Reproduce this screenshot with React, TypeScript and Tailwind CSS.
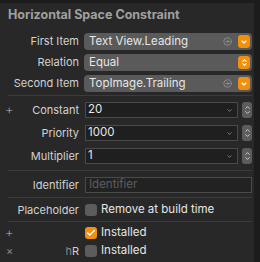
import { ChevronDown, ChevronUp, CircleArrowRight, Check } from "lucide-react";

const font = { fontFamily: "Inter, 'Liberation Sans', sans-serif" };

const Label = ({ children }: { children: React.ReactNode }) => (
  <div className="w-[79px] shrink-0 text-right text-[11px] text-[#d2d2d2]">{children}</div>
);

const OrangeBtn = ({ both }: { both?: boolean }) => (
  <div className="flex h-[13px] w-[12px] flex-col items-center justify-center rounded-[3px] bg-[#f0900c]">
    {both ? (
      <>
        <ChevronUp className="-mb-[3px] h-[7px] w-[7px] text-white" strokeWidth={3.5} />
        <ChevronDown className="h-[7px] w-[7px] text-white" strokeWidth={3.5} />
      </>
    ) : (
      <ChevronDown className="h-[8px] w-[8px] text-white" strokeWidth={3.5} />
    )}
  </div>
);

const Popup = ({ label, value, link, both }: { label: string; value: string; link?: boolean; both?: boolean }) => (
  <div className="flex h-[17px] items-center">
    <Label>{label}</Label>
    <div className="ml-[5px] flex h-[17px] flex-1 items-center rounded-[4px] bg-[#5a5a5a] pl-[5px] pr-[2px]">
      <span className="flex-1 text-[11.5px] text-[#e6e6e6]">{value}</span>
      {link && <CircleArrowRight className="mr-[6px] h-[9px] w-[9px] text-[#9a9a9a]" strokeWidth={2} />}
      <OrangeBtn both={both} />
    </div>
  </div>
);

const Stepper = () => (
  <div className="ml-[4px] flex h-[16px] w-[10px] flex-col items-center justify-center rounded-[3px] bg-[#5c5c5c]">
    <ChevronUp className="-mb-[2px] h-[7px] w-[7px] text-[#dcdcdc]" strokeWidth={3} />
    <ChevronDown className="h-[7px] w-[7px] text-[#dcdcdc]" strokeWidth={3} />
  </div>
);

const Field = ({ label, value, plus }: { label: string; value: string; plus?: boolean }) => (
  <div className="flex h-[16px] items-center">
    <div className="w-[18px] pl-[5px] text-[13px] font-light text-[#9a9a9a]">{plus ? "+" : ""}</div>
    <div className="w-[61px] shrink-0 text-right text-[11px] text-[#d2d2d2]">{label}</div>
    <div className="ml-[6px] flex h-[16px] flex-1 items-center border border-[#4a4a4a] bg-[#1f1f1f] pl-[2px] pr-[4px]">
      <span className="flex-1 text-[11.5px] text-[#e6e6e6]">{value}</span>
      <ChevronDown className="h-[7px] w-[7px] text-[#9a9a9a]" strokeWidth={2.5} />
    </div>
    <Stepper />
  </div>
);

const Sep = () => <div className="ml-[8px] h-px bg-[#3c3c3c]" />;

export default function App() {
  return (
    <div className="flex h-[262px] w-[260px] bg-[#1c1c1c]" style={font}>
      <div className="flex w-[254px] flex-col">
        <div className="h-[3px] bg-[#1c1c1c]" />
        <div className="flex flex-1 flex-col bg-[#282828] pr-[2px]">
          <div className="mt-[4px] pl-[8px] text-[12.5px] font-bold leading-[16px] text-[#a0a0a0]">
            Horizontal Space Constraint
          </div>
          <div className="mt-[10px] flex flex-col gap-[4px]">
            <Popup label="First Item" value="Text View.Leading" link />
            <Popup label="Relation" value="Equal" both />
            <Popup label="Second Item" value="TopImage.Trailing" link />
          </div>
          <div className="mt-[3px]">
            <Sep />
          </div>
          <div className="mt-[6px] flex flex-col gap-[7px]">
            <Field label="Constant" value="20" plus />
            <Field label="Priority" value="1000" />
            <Field label="Multiplier" value="1" />
          </div>
          <div className="mt-[6px]">
            <Sep />
          </div>
          <div className="mt-[6px] flex h-[16px] items-center">
            <Label>Identifier</Label>
            <div className="ml-[6px] flex h-[16px] flex-1 items-center border border-[#4a4a4a] bg-[#222222] pl-[3px] text-[11.5px] text-[#5e5e5e]">
              Identifier
            </div>
          </div>
          <div className="mt-[4px]">
            <Sep />
          </div>
          <div className="mt-[6px] flex h-[12px] items-center">
            <Label>Placeholder</Label>
            <div className="ml-[6px] h-[12px] w-[12px] rounded-[3px] bg-[#5c5c5c]" />
            <span className="ml-[4px] text-[11.5px] text-[#e6e6e6]">Remove at build time</span>
          </div>
          <div className="mt-[5px]">
            <Sep />
          </div>
          <div className="mt-[5px] flex h-[12px] items-center">
            <div className="w-[79px] pl-[5px] text-[13px] font-light text-[#9a9a9a]">+</div>
            <div className="ml-[6px] flex h-[12px] w-[12px] items-center justify-center rounded-[3px] bg-[#f0900c]">
              <Check className="h-[10px] w-[10px] text-white" strokeWidth={3.5} />
            </div>
            <span className="ml-[4px] text-[11.5px] text-[#e6e6e6]">Installed</span>
          </div>
          <div className="mt-[6px] flex h-[12px] items-center">
            <div className="w-[20px] pl-[6px] text-[11px] text-[#8a8a8a]">×</div>
            <div className="w-[59px] text-right text-[11px] text-[#d2d2d2]">
              <span className="text-[#8a8a8a]">h</span>R
            </div>
            <div className="ml-[6px] h-[12px] w-[12px] rounded-[3px] bg-[#5c5c5c]" />
            <span className="ml-[4px] text-[11.5px] text-[#e6e6e6]">Installed</span>
          </div>
        </div>
      </div>
      <div className="flex-1 bg-[#1c1c1c]" />
    </div>
  );
}
